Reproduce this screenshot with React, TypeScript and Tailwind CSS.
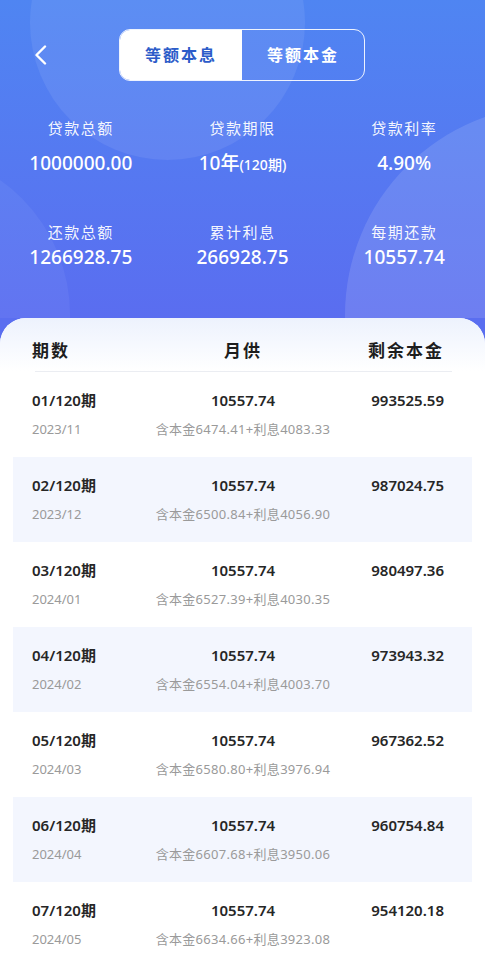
import React from "react"

const rows = [
    { no: "01", date: "2023/11", left: "993525.59", principal: "6474.41", interest: "4083.33" },
    { no: "02", date: "2023/12", left: "987024.75", principal: "6500.84", interest: "4056.90" },
    { no: "03", date: "2024/01", left: "980497.36", principal: "6527.39", interest: "4030.35" },
    { no: "04", date: "2024/02", left: "973943.32", principal: "6554.04", interest: "4003.70" },
    { no: "05", date: "2024/03", left: "967362.52", principal: "6580.80", interest: "3976.94" },
    { no: "06", date: "2024/04", left: "960754.84", principal: "6607.68", interest: "3950.06" },
    { no: "07", date: "2024/05", left: "954120.18", principal: "6634.66", interest: "3923.08" },
]

const font = { fontFamily: '"Noto Sans", "Noto Sans CJK SC", sans-serif' }

const Stat = ({ label, value, gap }: { label: string; value: React.ReactNode; gap: string }) => (
    <div className={`flex flex-col items-center ${gap}`}>
        <span className="text-[15px] leading-[20px] tracking-[1.5px] text-white/95">{label}</span>
        <span className="text-[19px] leading-[24px] font-medium text-white">{value}</span>
    </div>
)

export default function App() {
    return (
        <div className="w-[485px] h-[975px] overflow-hidden flex flex-col bg-[#5a6ef0]" style={font}>

            {/* Blue header */}
            <div className="relative h-[318px] shrink-0 overflow-hidden bg-gradient-to-b from-[#4f85f2] to-[#5a6df0]">
                <div className="absolute left-[30px] top-[-115px] w-[275px] h-[275px] rounded-full bg-white/[0.08]" />
                <div className="absolute left-[-260px] top-[150px] w-[330px] h-[330px] rounded-full bg-white/[0.05]" />
                <div className="absolute left-[345px] top-[105px] w-[420px] h-[420px] rounded-full bg-white/[0.12]" />

                <div className="relative">
                    {/* Top bar */}
                    <div className="flex items-center pt-[29px]">
                        <div className="w-[119px] flex pl-[33px]">
                            <svg width="14" height="20" viewBox="0 0 14 20" fill="none">
                                <path d="M12 1.5 3.5 10 12 18.5" stroke="white" strokeWidth="2.4" strokeLinecap="round" strokeLinejoin="round" />
                            </svg>
                        </div>
                        <div className="flex w-[246px] h-[52px] rounded-[11px] border-[1.5px] border-white/90 overflow-hidden">
                            <div className="flex-1 bg-white flex items-center justify-center text-[16px] font-bold tracking-[2px] text-[#2c5cc9]">
                                等额本息
                            </div>
                            <div className="flex-1 flex items-center justify-center text-[16px] font-bold tracking-[2px] text-white">
                                等额本金
                            </div>
                        </div>
                    </div>

                    {/* Stats */}
                    <div className="grid grid-cols-3 mt-[37px]">
                        <Stat label="贷款总额" value="1000000.00" gap="gap-[13px]" />
                        <Stat
                            label="贷款期限"
                            value={<>10年<span className="text-[14px]">(120期)</span></>}
                            gap="gap-[13px]"
                        />
                        <Stat label="贷款利率" value="4.90%" gap="gap-[13px]" />
                    </div>
                    <div className="grid grid-cols-3 mt-[45px]">
                        <Stat label="还款总额" value="1266928.75" gap="gap-[3px]" />
                        <Stat label="累计利息" value="266928.75" gap="gap-[3px]" />
                        <Stat label="每期还款" value="10557.74" gap="gap-[3px]" />
                    </div>
                </div>
            </div>

            {/* Table card */}
            <div className="flex-1 rounded-t-[26px] bg-white overflow-hidden">
                <div className="bg-gradient-to-b from-[#edf2fd] to-white">
                    <div className="grid grid-cols-[121px_180px_111px] pl-[32px] h-[53px] items-end pb-[8px] text-[17px] font-bold text-[#1d1d1d] tracking-[2px]">
                        <span>期数</span>
                        <span className="text-center">月供</span>
                        <span className="text-right">剩余本金</span>
                    </div>
                </div>
                <div className="ml-[35px] mr-[33px] h-px bg-[#ebedf2]" />

                {rows.map((r, i) => (
                    <div
                        key={r.no}
                        className={`mx-[13px] h-[85px] pl-[19px] pt-[18px] ${i % 2 === 1 ? "bg-[#f3f6fe]" : ""}`}
                    >
                        <div className="grid grid-cols-[121px_180px_111px] items-center">
                            <span className="text-[15px] leading-[20px] font-semibold text-[#262626]">{r.no}/120期</span>
                            <span className="text-[15px] leading-[20px] font-semibold text-[#262626] text-center">10557.74</span>
                            <span className="text-[15px] leading-[20px] font-semibold text-[#262626] text-right">{r.left}</span>
                        </div>
                        <div className="grid grid-cols-[121px_180px_111px] items-center mt-[10px]">
                            <span className="text-[13px] leading-[18px] text-[#9a9a9a]">{r.date}</span>
                            <span className="text-[13px] leading-[18px] tracking-[0.3px] text-[#9a9a9a] text-center whitespace-nowrap">
                                含本金{r.principal}+利息{r.interest}
                            </span>
                            <span />
                        </div>
                    </div>
                ))}
            </div>
        </div>
    )
}
